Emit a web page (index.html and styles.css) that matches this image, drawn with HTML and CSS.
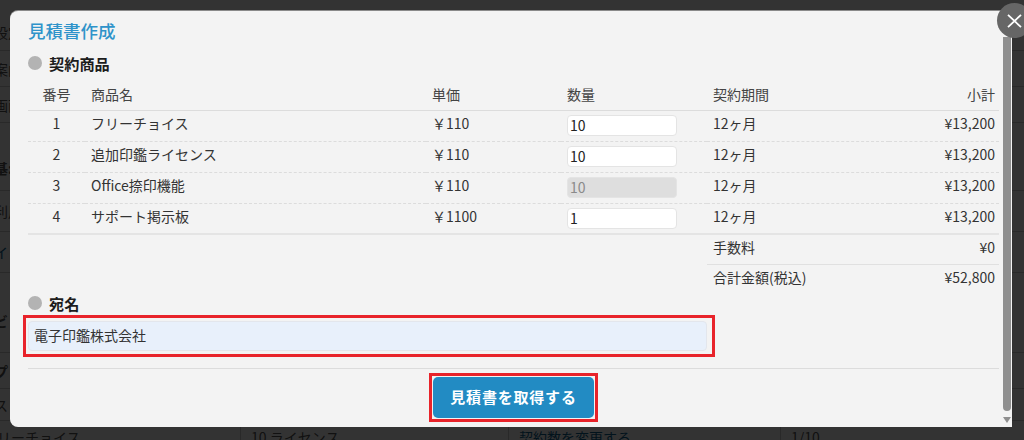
FILE: index.html
```html
<!DOCTYPE html>
<html lang="ja">
<head>
  <meta charset="UTF-8" />
  <meta name="viewport" content="width=device-width, initial-scale=1.0"/>
  <title>見積書作成</title>
  <link rel="stylesheet" href="styles.css">
</head>
<body>
  <!-- 背景のページ（オーバーレイで暗くなっている） -->
  <div class="page">
    <div class="page-row row-first"><span class="page-label">設定支</span></div>
    <div class="page-row"><span class="page-label">案内</span></div>
    <div class="page-row"><span class="page-label">画面</span></div>
    <div class="page-row row-tall"><b class="page-label">基:</b></div>
    <div class="page-row row-mid"><span class="page-label">利用</span></div>
    <div class="page-row row-mid"><span class="page-label page-link">イ</span></div>
    <div class="page-row row-tallest"><b class="page-label">ビ</b></div>
    <div class="page-row"><b class="page-label">プ</b></div>
    <div class="page-row row-short"><span class="page-label">ス</span></div>
    <div class="page-cells">
      <span class="page-cell cell-name">フリーチョイス</span>
      <span class="page-cell cell-count">10 ライセンス</span>
      <span class="page-cell cell-action">契約数を変更する</span>
      <span class="page-cell cell-usage">1/10</span>
    </div>
  </div>

  <div class="overlay"></div>

  <div class="modal">
    <div class="modal-body">
      <h1 class="modal-title">見積書作成</h1>

      <h2 class="section-title">契約商品</h2>
      <table class="items">
        <colgroup>
          <col class="col-no"><col class="col-name"><col class="col-price">
          <col class="col-qty"><col class="col-term"><col class="col-sub">
        </colgroup>
        <thead>
          <tr>
            <th class="center">番号</th>
            <th>商品名</th>
            <th>単価</th>
            <th>数量</th>
            <th>契約期間</th>
            <th class="right">小計</th>
          </tr>
        </thead>
        <tbody>
          <tr>
            <td class="center">1</td>
            <td>フリーチョイス</td>
            <td>￥110</td>
            <td class="qty-cell"><input class="qty" type="text" value="10"></td>
            <td>12ヶ月</td>
            <td class="right">¥13,200</td>
          </tr>
          <tr>
            <td class="center">2</td>
            <td>追加印鑑ライセンス</td>
            <td>￥110</td>
            <td class="qty-cell"><input class="qty" type="text" value="10"></td>
            <td>12ヶ月</td>
            <td class="right">¥13,200</td>
          </tr>
          <tr>
            <td class="center">3</td>
            <td>Office捺印機能</td>
            <td>￥110</td>
            <td class="qty-cell"><input class="qty" type="text" value="10" disabled></td>
            <td>12ヶ月</td>
            <td class="right">¥13,200</td>
          </tr>
          <tr>
            <td class="center">4</td>
            <td>サポート掲示板</td>
            <td>￥1100</td>
            <td class="qty-cell"><input class="qty" type="text" value="1"></td>
            <td>12ヶ月</td>
            <td class="right">¥13,200</td>
          </tr>
        </tbody>
        <tfoot>
          <tr>
            <td colspan="4"></td>
            <td class="lined">手数料</td>
            <td class="lined right">¥0</td>
          </tr>
          <tr>
            <td colspan="4"></td>
            <td>合計金額(税込)</td>
            <td class="right">¥52,800</td>
          </tr>
        </tfoot>
      </table>

      <h2 class="section-title section-address">宛名</h2>
      <div class="mark mark-address">
        <input class="address" type="text" value="電子印鑑株式会社">
      </div>

      <div class="modal-footer">
        <div class="mark mark-button">
          <button class="submit" type="button">見積書を取得する</button>
        </div>
      </div>
    </div>

    <!-- スクロールバー -->
    <div class="scrollbar">
      <div class="scroll-thumb"></div>
      <div class="scroll-arrow"></div>
    </div>
  </div>

  <button class="close" type="button" aria-label="閉じる">
    <svg width="15" height="14" viewBox="0 0 15 14"><path d="M1 0.8 14 13.2M14 0.8 1 13.2" stroke="#fff" stroke-width="1.8" fill="none"/></svg>
  </button>
</body>
</html>
```

FILE: styles.css
```css
html, body {
  margin: 0;
  padding: 0;
  width: 100%;
  height: 100%;
  overflow: hidden;
}
body {
  position: relative;
  font-family: "Noto Sans CJK JP", "Noto Sans", sans-serif;
  font-size: 14px;
  color: #333;
  background-color: #fff;
}

/* 背景のページ */
.page {
  height: 440px;
  overflow: hidden;
  font-size: 14px;
  color: #555;
}
.page-row {
  height: 36px;
  display: flex;
  align-items: center;
  box-sizing: border-box;
  border-bottom: 1px solid #ccc;
}
.row-first { height: 51px; padding-top: 13px; }
.row-tall { height: 68px; align-items: flex-end; padding-bottom: 12px; }
.row-mid { height: 41px; }
.row-tallest { height: 80px; align-items: flex-end; padding-bottom: 21px; }
.row-short { height: 32px; }
.page-label {
  margin-left: -6px;
  white-space: nowrap;
}
.page-link { color: #0b5f8d; }
.page-cells {
  display: flex;
  height: 30px;
  align-items: center;
  margin-top: 1px;
}
.page-cell { box-sizing: border-box; white-space: nowrap; }
.cell-name { flex: none; width: 257px; margin-left: -17px; }
.cell-count { width: 268px; padding-left: 10px; border-left: 1px solid #ccc; }
.cell-action { width: 272px; padding-left: 10px; border-left: 1px solid #ccc; color: #0b5f8d; }
.cell-usage { padding-left: 10px; border-left: 1px solid #ccc; }

.overlay {
  position: absolute;
  inset: 0;
  background: rgba(0, 0, 0, 0.8);
}

/* モーダル */
.modal {
  position: absolute;
  left: 10px;
  top: 11px;
  width: 1002px;
  height: 416px;
  display: flex;
  box-sizing: border-box;
  background: #f3f3f3;
  border-radius: 8px 0 0 8px;
  box-shadow: 0 -1px 0 #8a8a8a;
}
.modal-body {
  flex: 1;
  min-width: 0;
  padding: 8px 1px 0 18px;
}
.modal-title {
  margin: 0;
  font-size: 17.5px;
  font-weight: 500;
  line-height: 24px;
  color: #2f93ca;
}
.section-title {
  display: flex;
  align-items: center;
  gap: 7px;
  margin: 8px 0 0;
  height: 24px;
  font-size: 15.2px;
  font-weight: 700;
  color: #1c1c1c;
}
.section-title::before {
  content: "";
  width: 14px;
  height: 14px;
  border-radius: 50%;
  background: #b3b3b3;
}
.section-address { margin-top: -3px; }

/* 商品テーブル */
.items {
  width: 100%;
  margin-top: 3px;
  table-layout: fixed;
  border-collapse: collapse;
}
.col-no { width: 57px; }
.col-name { width: 341px; }
.col-price { width: 135px; }
.col-qty { width: 146px; }
.col-sub { width: 110px; }
.items th,
.items td {
  box-sizing: border-box;
  padding: 0 4px 0 6px;
  font-weight: 400;
  line-height: 20px;
  text-align: left;
  white-space: nowrap;
}
.items th {
  height: 32px;
  color: #444;
  border-bottom: 1px solid #dcdcdc;
}
.items tbody td {
  height: 31px;
  padding-top: 2px;
  vertical-align: top;
  border-bottom: 1px dashed #dcdcdc;
}
.items tbody td.qty-cell { padding-top: 4px; }
.items tbody tr:last-child td { border-bottom: 2px solid #e4e4e4; }
.items tfoot td {
  height: 30px;
  padding-top: 2px;
  vertical-align: top;
}
.items .lined { border-bottom: 1px solid #e0e0e0; }
.items .center { text-align: center; padding-left: 0; padding-right: 0; }
.items .right { text-align: right; }

.qty {
  display: block;
  box-sizing: border-box;
  width: 110px;
  height: 21px;
  padding: 0 2px;
  font-family: inherit;
  font-size: 14px;
  color: #222;
  background: #fff;
  border: 1px solid #e4e4e4;
  border-radius: 4px;
}
.qty:disabled {
  color: #8a8a8a;
  background: #dedede;
}

/* 赤枠 */
.mark {
  box-sizing: border-box;
  border: 3px solid #e8232a;
}
.mark-address {
  width: 692px;
  margin-left: -5px;
  padding: 3px 5px 3px 2px;
}
.address {
  display: block;
  box-sizing: border-box;
  width: 100%;
  height: 30px;
  padding: 0 5px 3px;
  font-family: inherit;
  font-size: 14px;
  color: #333;
  background: #e8f0fb;
  border: 1px solid #e3e6ec;
  border-radius: 4px;
}

.modal-footer {
  display: flex;
  justify-content: center;
  margin-top: 11px;
  padding-top: 4px;
  border-top: 1px solid #dcdcdc;
}
.mark-button { padding: 1px; }
.submit {
  display: block;
  width: 161px;
  height: 41px;
  padding: 0 0 2px;
  font-family: inherit;
  font-size: 15px;
  font-weight: 700;
  letter-spacing: 0.8px;
  color: #fff;
  background: #228bc3;
  border: none;
  border-radius: 5px;
}

/* スクロールバー */
.scrollbar {
  flex: none;
  width: 12px;
  box-sizing: border-box;
  padding: 26px 1px 0 2px;
  display: flex;
  flex-direction: column;
  align-items: center;
}
.scroll-thumb {
  width: 8px;
  height: 374px;
  background: #8f8f8f;
  border-radius: 0 0 4px 4px;
}
.scroll-arrow {
  margin-top: 6px;
  width: 0;
  height: 0;
  border-left: 4px solid transparent;
  border-right: 4px solid transparent;
  border-top: 6px solid #8f8f8f;
}

.close {
  position: absolute;
  left: 997px;
  top: 3px;
  width: 35px;
  height: 35px;
  padding: 0 0 0 10px;
  display: flex;
  align-items: center;
  box-sizing: border-box;
  background: #666;
  border: none;
  border-radius: 50%;
}
```
